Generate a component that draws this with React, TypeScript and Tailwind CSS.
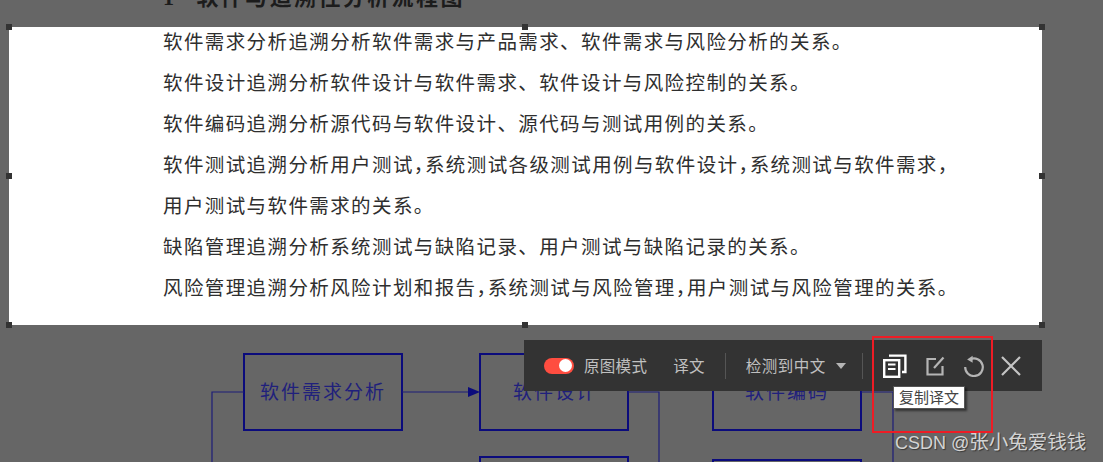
const lines = [
  "软件需求分析追溯分析软件需求与产品需求、软件需求与风险分析的关系。",
  "软件设计追溯分析软件设计与软件需求、软件设计与风险控制的关系。",
  "软件编码追溯分析源代码与软件设计、源代码与测试用例的关系。",
  "软件测试追溯分析用户测试，系统测试各级测试用例与软件设计，系统测试与软件需求，",
  "用户测试与软件需求的关系。",
  "缺陷管理追溯分析系统测试与缺陷记录、用户测试与缺陷记录的关系。",
  "风险管理追溯分析风险计划和报告，系统测试与风险管理，用户测试与风险管理的关系。",
];

// resize handles round the selection
const handles = [
  "left-[6px] top-[24px]",
  "left-[522px] top-[24px]",
  "left-[1039px] top-[24px]",
  "left-[6px] top-[173px]",
  "left-[1039px] top-[173px]",
  "left-[6px] top-[322px]",
  "left-[522px] top-[322px]",
  "left-[1039px] top-[322px]",
];

// the commas in the picture are half width, the other punctuation is not
const DocLine = ({ text }: { text: string }) => (
  <div className="whitespace-nowrap">
    {text.split(/(，)/).map((part, i) =>
      part === "，" ? (
        <span key={i} className="[font-feature-settings:'halt']">
          {part}
        </span>
      ) : (
        part
      ),
    )}
  </div>
);

const Diagram = () => (
  <svg viewBox="0 325 1103 137" className="block w-[1103px] h-[137px]" fill="none">
    <g stroke="#0b0b7c" strokeWidth="2">
      <rect x="244" y="354" width="158" height="76" />
      <rect x="480" y="354" width="148" height="76" />
      <rect x="713" y="354" width="148" height="76" />
      <rect x="480" y="457" width="148" height="40" />
      <rect x="713" y="460" width="148" height="40" />
    </g>
    <g stroke="#1d1d78" strokeWidth="1.2">
      <path d="M244 392H212V462" />
      <path d="M402 392H470" />
      <path d="M628 392H659V462" />
      <path d="M861 392H893V462" />
    </g>
    <path d="M468 387L480 392L468 397Z" fill="#0b0b7c" />
    <g fill="#20207c" fontSize="19" letterSpacing="2" textAnchor="middle">
      <text x="323" y="399">软件需求分析</text>
      <text x="555" y="399">软件设计</text>
      <text x="787" y="399">软件编码</text>
    </g>
  </svg>
);

const CopyIcon = () => (
  <svg viewBox="0 0 24 24" className="w-[24px] h-[24px]" fill="none" stroke="#fff" strokeWidth="2.4">
    <rect x="1.2" y="6.2" width="15" height="16.6" />
    <path d="M5 10.5H12.5M5 15H12.5" strokeWidth="2.2" />
    <path d="M6 1.6H22.4V18H19" />
  </svg>
);

const EditIcon = () => (
  <svg viewBox="0 0 20 20" className="w-[20px] h-[20px]" fill="none" stroke="#b5b5b5" strokeWidth="2.2">
    <path d="M11 3H2.5V18.5H17.5V10" />
    <path d="M9 12L18.5 1.5" />
  </svg>
);

const UndoIcon = () => (
  <svg viewBox="0 0 24 24" className="w-[22px] h-[22px]" fill="none" stroke="#b5b5b5" strokeWidth="2.4">
    <path d="M8 4.6A9.6 9.6 0 1 1 2.4 13" />
    <path d="M4.5 4.8L10.5 0.8L10.5 8.4Z" fill="#b5b5b5" stroke="none" />
  </svg>
);

const CloseIcon = () => (
  <svg viewBox="0 0 20 20" className="w-[20px] h-[20px]" fill="none" stroke="#c4c4c4" strokeWidth="2.2">
    <path d="M1 1L19 19M19 1L1 19" />
  </svg>
);

const Toolbar = () => (
  <div className="absolute left-[524px] top-[340px] flex h-[51px] w-[518px] items-center bg-[#333333] pl-[20px] text-[15.5px] text-[#c0c0c0]">
    <span className="flex h-[16px] w-[30px] items-center justify-end rounded-full bg-[#ff4d40] pr-[2px]">
      <span className="h-[13px] w-[13px] rounded-full bg-white" />
    </span>
    <span className="ml-[10px] tracking-[0.3px]">原图模式</span>
    <span className="ml-[26px] tracking-[0.3px]">译文</span>
    <span className="ml-[20px] h-[26px] w-px bg-[#555]" />
    <span className="ml-[20px] tracking-[0.5px]">检测到中文</span>
    <span className="ml-[10px] h-0 w-0 border-x-[5px] border-t-[6px] border-x-transparent border-t-[#b5b5b5]" />
    <span className="ml-[16px] h-[26px] w-px bg-[#555]" />
    <span className="ml-[20px] flex items-center">
      <CopyIcon />
    </span>
    <span className="ml-[18px] flex items-center">
      <EditIcon />
    </span>
    <span className="ml-[18px] flex items-center">
      <UndoIcon />
    </span>
    <span className="ml-[16px] flex items-center">
      <CloseIcon />
    </span>
  </div>
);

export default function App() {
  return (
    <div className="relative h-[462px] w-[1103px] overflow-hidden bg-[#666666] font-['Noto_Sans_CJK_SC',sans-serif]">
      {/* document behind the selection, title cut off by the top edge */}
      <div className="h-[27px] overflow-hidden pl-[163px] text-[#1c1c1c]">
        <div className="-mt-[19px] whitespace-nowrap text-[22px] font-bold leading-[28px] tracking-[2.4px]">
          <span className="mr-[20px] font-['Liberation_Serif',serif]">1</span>
          软件与追溯性分析流程图
        </div>
      </div>

      <div className="ml-[9px] flex h-[298px] w-[1033px] flex-col gap-[13px] bg-white pl-[154px] text-[19.5px] leading-[28px] tracking-[1.4px] text-[#2e2e2e]">
        {lines.map((line) => (
          <DocLine key={line} text={line} />
        ))}
      </div>

      <Diagram />

      {handles.map((pos) => (
        <span key={pos} className={`absolute h-[6px] w-[6px] bg-[#333333] ${pos}`} />
      ))}

      <Toolbar />

      <div className="absolute left-[893px] top-[386px] flex h-[23px] w-[72px] items-center justify-center border border-[#555] bg-white text-[15px] text-[#444] shadow-[2px_2px_2px_rgba(0,0,0,0.5)]">
        复制译文
      </div>

      <div className="absolute left-[872px] top-[336px] h-[97px] w-[121px] border-2 border-[#ee1c25]" />

      <div className="absolute left-[895px] top-[429px] whitespace-nowrap font-['Liberation_Sans','Noto_Sans_CJK_SC',sans-serif] text-[18px] leading-[26px] text-[#d4d4d4] [text-shadow:1px_1px_1px_rgba(0,0,0,0.45)]">
        CSDN @<span className="text-[19.5px]">张小兔爱钱钱</span>
      </div>
    </div>
  );
}
